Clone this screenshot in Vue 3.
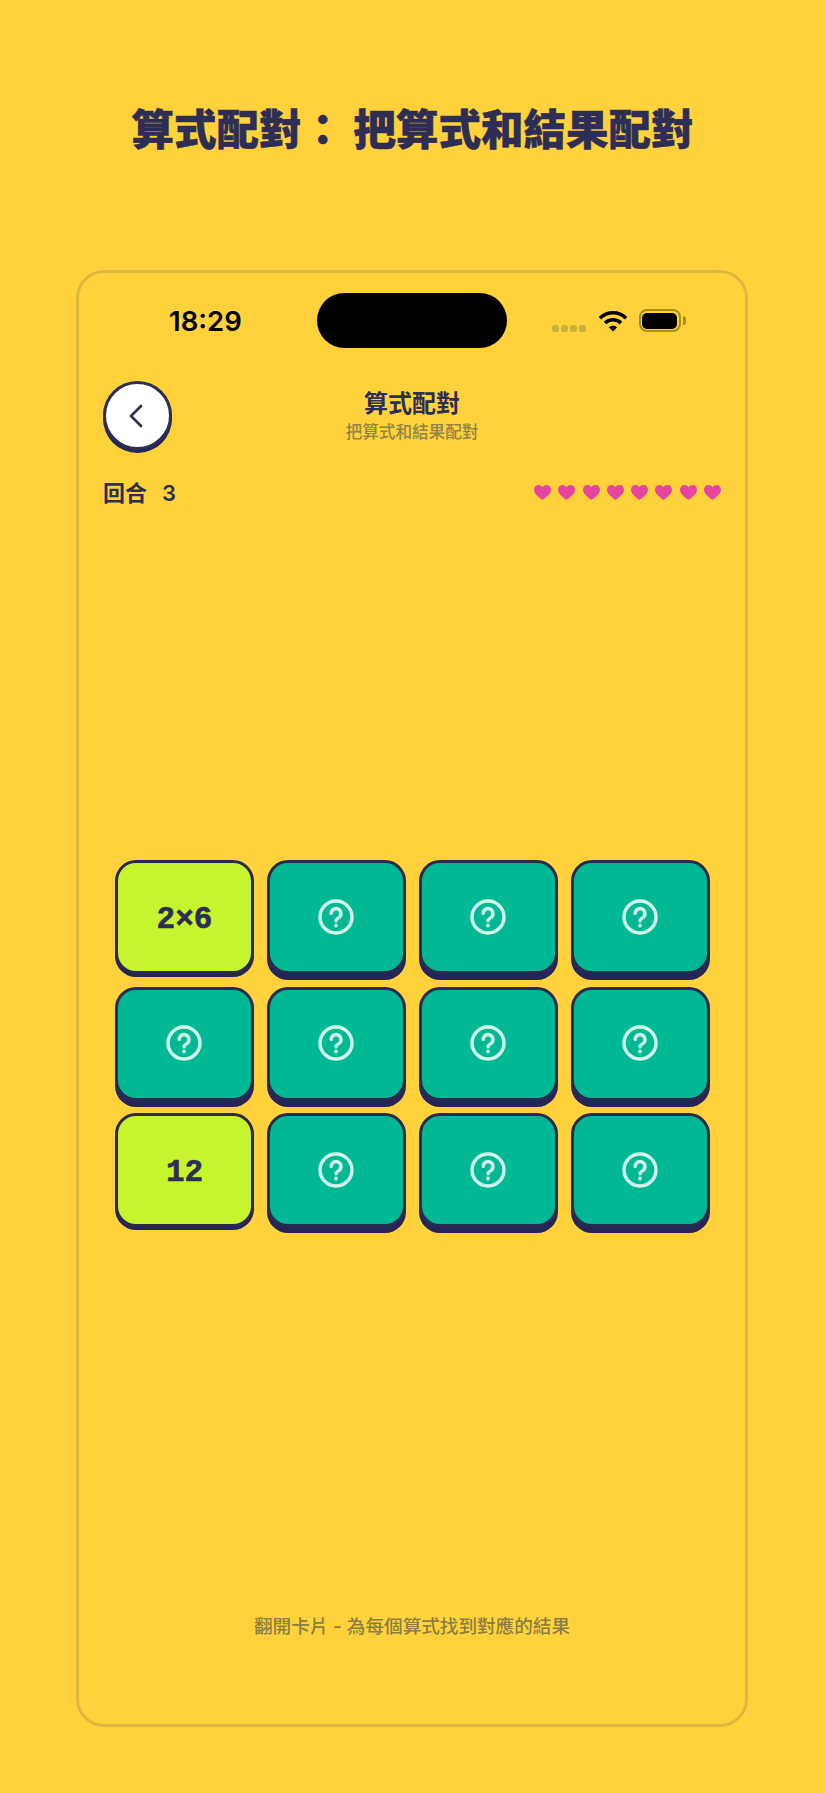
<script setup>
// 卡片資料:只有翻開的卡片才有文字
const cards = [
  { id: 1, text: '2×6' }, { id: 2 }, { id: 3 }, { id: 4 },
  { id: 5 }, { id: 6 }, { id: 7 }, { id: 8 },
  { id: 9, text: '12' }, { id: 10 }, { id: 11 }, { id: 12 }
]
const hearts = 8
</script>

<template>
  <div class="page">
    <h1 class="headline">算式配對： 把算式和結果配對</h1>

    <div class="phone">
      <!-- 狀態列 -->
      <div class="status">
        <div class="time">18:29</div>
        <div class="island"></div>
        <div class="indicators">
          <div class="dots"><i></i><i></i><i></i><i></i></div>
          <svg class="wifi" width="30" height="22" viewBox="0 0 30 22" fill="none" stroke="#000" stroke-width="3.4">
            <path d="M2 8.2C9.2 .9 20.8 .9 28 8.2" />
            <path d="M7 13C11.4 8.7 18.6 8.7 23 13" />
            <path d="M15 21.5 10.8 17.2C13.1 15.1 16.9 15.1 19.2 17.2Z" fill="#000" stroke="none" />
          </svg>
          <div class="battery"><span></span></div>
        </div>
      </div>

      <!-- 標題列 -->
      <div class="top">
        <button class="back">
          <svg width="14" height="24" viewBox="0 0 14 24" fill="none" stroke="#2d2d55" stroke-width="2.6" stroke-linecap="round" stroke-linejoin="round">
            <path d="M12 2 2 12l10 10" />
          </svg>
        </button>
        <div class="title">
          <div class="name">算式配對</div>
          <div class="sub">把算式和結果配對</div>
        </div>
      </div>

      <!-- 回合和生命 -->
      <div class="stats">
        <div class="round"><span>回合</span><span>3</span></div>
        <div class="hearts">
          <svg v-for="n in hearts" :key="n" width="17" height="15" viewBox="0 0 17 15">
            <path fill="#e545a0" d="M8.5 15C6 12.9 0 9.3 0 4.700 0 2 2 0 4.500 0c1.700 0 3.100.8 4 2.200C9.400.8 10.800 0 12.500 0 15 0 17 2 17 4.700 17 9.300 11 12.900 8.500 15Z" />
          </svg>
        </div>
      </div>

      <!-- 卡片 -->
      <div class="grid">
        <div v-for="card in cards" :key="card.id" class="card" :class="{ open: card.text }">
          <span v-if="card.text">{{ card.text }}</span>
          <svg v-else width="38" height="38" viewBox="0 0 38 38" fill="none" stroke="#d3f7ea" stroke-width="3.400" stroke-linecap="round">
            <circle cx="19" cy="19" r="16" />
            <path d="M14.200 15.400a4.900 4.900 0 1 1 7.600 4.200c-1.800 1.100-2.800 1.800-2.800 3.200" />
            <circle cx="19" cy="27.500" r="1.100" fill="#d3f7ea" stroke-width="1.600" />
          </svg>
        </div>
      </div>

      <div class="hint">翻開卡片 - 為每個算式找到對應的結果</div>
    </div>
  </div>
</template>

<style>
html, body {
  background: #ffd23c;
}
</style>

<style scoped>
.page {
  width: 825px;
  height: 1793px;
  background: #ffd23c;
  color: #2d2d55;
  font-family: "Inter", "Noto Sans CJK TC", sans-serif;
  overflow: hidden;
}
.headline {
  margin: 0;
  height: 270px;
  padding-top: 97px;
  box-sizing: border-box;
  text-align: center;
  font-size: 42.500px;
  line-height: 60px;
  font-weight: 900;
  font-family: "Noto Sans CJK TC", sans-serif;
  -webkit-text-stroke: 0.500px #2d2d55;
}
.phone {
  width: 672px;
  height: 1457px;
  margin-left: 76px;
  box-sizing: border-box;
  border: 3px solid #dcb840;
  border-radius: 28px;
  display: flex;
  flex-direction: column;
}

/* 狀態列 */
.status {
  display: flex;
  align-items: center;
  height: 55px;
  margin-top: 20px;
}
.time {
  width: 238px;
  box-sizing: border-box;
  padding-left: 90px;
  font-size: 27.500px;
  font-weight: 600;
  color: #000;
}
.island {
  width: 190px;
  height: 55px;
  border-radius: 28px;
  background: #000;
}
.indicators {
  display: flex;
  align-items: center;
  padding-left: 45px;
}
.dots {
  display: flex;
  gap: 2.500px;
  margin-top: 16px;
  margin-right: 12px;
}
.dots i {
  width: 6.500px;
  height: 6.500px;
  border-radius: 2.500px;
  background: #c9b03c;
}
.wifi {
  margin-right: 11px;
}
.battery {
  position: relative;
  width: 42px;
  height: 23px;
  box-sizing: border-box;
  border: 2px solid #a88f1c;
  border-radius: 8px;
  padding: 1.500px;
}
.battery span {
  display: block;
  height: 100%;
  border-radius: 5px;
  background: #000;
}
.battery::after {
  content: "";
  position: absolute;
  right: -7px;
  top: 5px;
  width: 3px;
  height: 9px;
  border-radius: 0 3px 3px 0;
  background: #a88f1c;
}

/* 標題列 */
.top {
  display: grid;
  grid-template-columns: 69px 1fr 69px;
  margin-top: 33px;
  padding: 0 24px;
  height: 72px;
}
.back {
  width: 69px;
  height: 69px;
  padding: 0 3px 0 0;
  border: 3px solid #2d2d55;
  border-radius: 50%;
  background: #fff;
  box-shadow: 0 3px 0 #25255a;
  display: flex;
  align-items: center;
  justify-content: center;
}
.title {
  text-align: center;
  padding-top: 7px;
}
.name {
  font-size: 24px;
  line-height: 32px;
  font-weight: 700;
}
.sub {
  font-size: 16.600px;
  line-height: 25px;
  font-weight: 500;
  color: #8f8546;
}

/* 回合和生命 */
.stats {
  display: flex;
  align-items: center;
  justify-content: space-between;
  height: 26px;
  margin-top: 25px;
  margin-bottom: 2px;
  padding: 0 24px;
}
.round {
  display: flex;
  align-items: baseline;
  gap: 15px;
  font-size: 22px;
  font-weight: 600;
}
.hearts {
  display: flex;
  gap: 7.300px;
  margin-top: 2px;
}

/* 卡片 */
.grid {
  display: grid;
  grid-template-columns: repeat(4, 139px);
  grid-auto-rows: 114px;
  column-gap: 13px;
  row-gap: 12.500px;
  margin-top: 354px;
  padding-left: 36px;
}
.card {
  box-sizing: border-box;
  border: 3px solid #2a2a50;
  border-radius: 21px;
  background: #00b894;
  box-shadow: 0 6px 0 #25255a;
  display: flex;
  align-items: center;
  justify-content: center;
}
.card svg {
  margin-top: -1px;
  margin-right: 1px;
}
.card.open {
  background: #c6f52e;
  box-shadow: 0 3px 0 #25255a;
  padding-top: 4px;
  font-family: "Liberation Mono", monospace;
  font-size: 31px;
  font-weight: 700;
  -webkit-text-stroke: 0.600px #2d2d55;
}

.hint {
  margin-top: auto;
  margin-bottom: 85px;
  text-align: center;
  font-size: 18.600px;
  line-height: 26px;
  font-weight: 500;
  color: #8a7f42;
}
</style>
